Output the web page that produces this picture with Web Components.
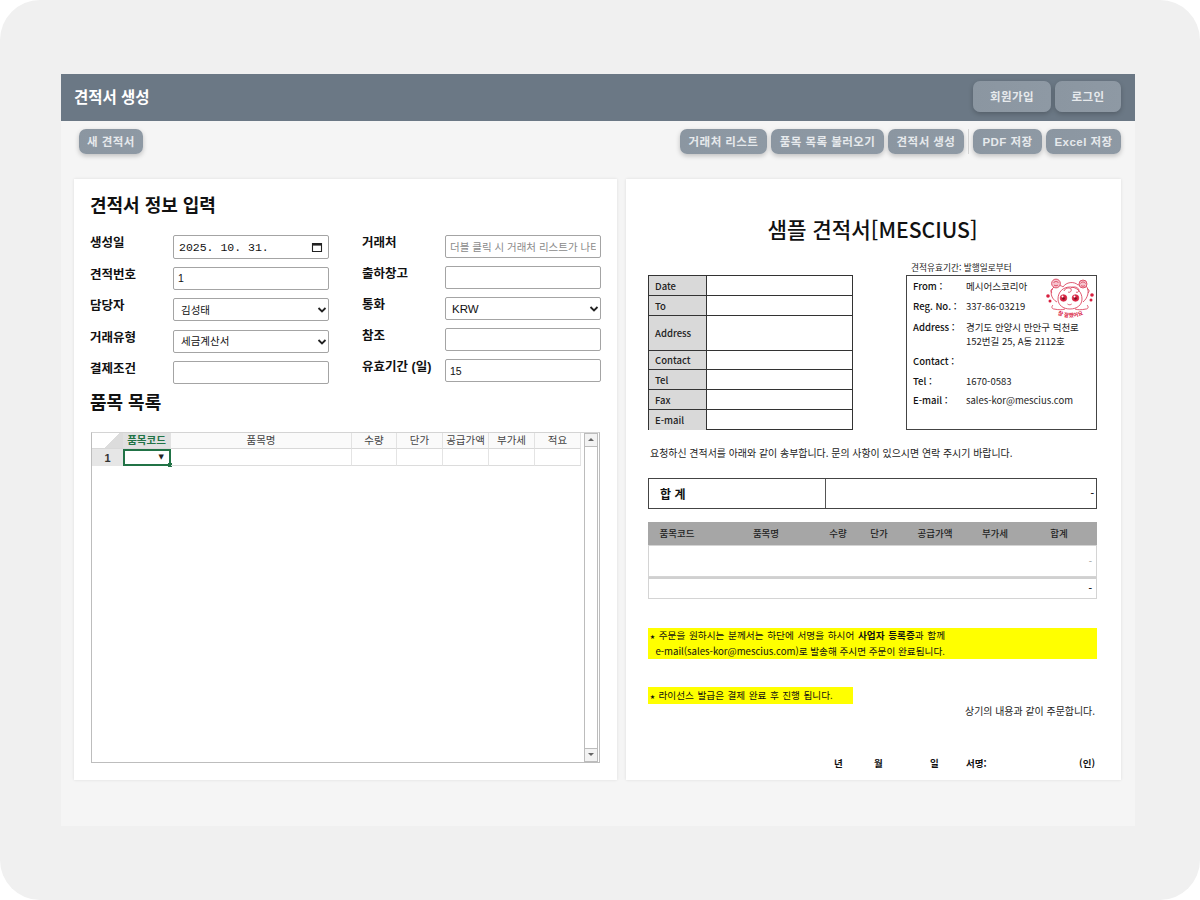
<!DOCTYPE html>
<html lang="ko">
<head>
<meta charset="utf-8">
<title>견적서 생성</title>
<style>
    html, body { margin: 0; padding: 0; background: #fff; }
    body { font-family: "Noto Sans CJK KR", "Liberation Sans", sans-serif; }
</style>
</head>
<body>
<quote-app></quote-app>

<script>
const SANS = `"Liberation Sans", "Noto Sans CJK KR", sans-serif`;

class ToolButton extends HTMLElement {
    constructor() {
        super();
        this.attachShadow({mode: 'open'});
        this.shadowRoot.innerHTML = `
<style>
    :host { display: inline-block; }
    button {
        background: linear-gradient(90deg, #8b96a1, #8e99a4);
        border: 0;
        border-radius: 7px;
        box-shadow: 0 2px 5px rgba(0, 0, 0, 0.22);
        color: #e6e9ec;
        display: block;
        font: bold 11.5px ${SANS};
        height: var(--btn-height, 25px);
        letter-spacing: 0.45px;
        padding: 0 0 2px 0;
        text-align: center;
        white-space: nowrap;
        width: var(--btn-width, 70px);
    }
</style>
<button><slot></slot></button>`;
    }

    connectedCallback() {
        if(this.dataset.width) {
            this.style.setProperty("--btn-width", `${this.dataset.width}px`);
        }
        if(this.dataset.height) {
            this.style.setProperty("--btn-height", `${this.dataset.height}px`);
        }
    }
}

class AppHeader extends HTMLElement {
    constructor() {
        super();
        this.attachShadow({mode: 'open'});
        this.shadowRoot.innerHTML = `
<style>
    :host {
        align-items: center;
        background: #6b7885;
        box-sizing: border-box;
        display: flex;
        height: 47px;
        justify-content: space-between;
        padding: 0 14px 0 13px;
    }
    h1 { color: #fff; font: bold 15.5px ${SANS}; margin: 0 0 4px 0; }
    .actions { display: flex; gap: 4px; margin-bottom: 2px; }
</style>
<h1>견적서 생성</h1>
<div class="actions">
    <tool-button data-width="78" data-height="31">회원가입</tool-button>
    <tool-button data-width="66" data-height="31">로그인</tool-button>
</div>`;
    }
}

class AppToolbar extends HTMLElement {
    constructor() {
        super();
        this.attachShadow({mode: 'open'});
        this.shadowRoot.innerHTML = `
<style>
    :host {
        display: flex;
        height: 58px;
        box-sizing: border-box;
        justify-content: space-between;
        padding: 8px 14px 0 18px;
    }
    .group { align-items: flex-start; display: flex; gap: 4px; }
    .sep { background: #d3d3d3; height: 25px; width: 1px; }
</style>
<div class="group"><tool-button data-width="64">새 견적서</tool-button></div>
<div class="group">
    <tool-button data-width="87">거래처 리스트</tool-button>
    <tool-button data-width="113">품목 목록 불러오기</tool-button>
    <tool-button data-width="76">견적서 생성</tool-button>
    <div class="sep"></div>
    <tool-button data-width="69">PDF 저장</tool-button>
    <tool-button data-width="75">Excel 저장</tool-button>
</div>`;
    }
}

class FormField extends HTMLElement {
    constructor() {
        super();
        this.attachShadow({mode: 'open'});
    }

    connectedCallback() {
        let type = this.dataset.type || "text";
        let value = this.dataset.value || "";
        let control = "";

        if(type === "date") {
            control = `<div class="box date"><span>${value}</span>
                <svg width="12" height="12" viewBox="0 0 12 12"><path d="M1.5 2.5h9v8h-9z" fill="none" stroke="#222" stroke-width="1.1"/><path d="M1.5 2h9v2.6h-9z" fill="#222"/></svg></div>`;
        } else if(type === "select") {
            control = `<div class="pick"><select class="box ${this.dataset.font || ""}"><option>${value}</option></select>
                <svg width="10" height="8" viewBox="0 0 10 8"><path d="M1.5 2l3.5 3.5L8.5 2" fill="none" stroke="#222" stroke-width="1.8"/></svg></div>`;
        } else {
            control = `<input class="box" type="text" value="${value}" placeholder="${this.dataset.placeholder || ""}">`;
        }

        this.shadowRoot.innerHTML = `
<style>
    :host {
        align-items: start;
        display: grid;
        grid-template-columns: 83px 156px;
        height: 24px;
    }
    label { color: #111; font: bold 12.5px/16px ${SANS}; white-space: nowrap; }
    .box {
        background: #fff;
        border: 1px solid #a4a4a4;
        border-radius: 2px;
        box-sizing: border-box;
        color: #111;
        display: block;
        font: 10.5px ${SANS};
        height: 23px;
        margin: 0;
        outline: 0;
        padding: 0 4px;
        width: 156px;
    }
    input::placeholder { color: #8a8a8a; opacity: 1; }
    .pick { position: relative; }
    .pick svg { position: absolute; right: 2px; top: 8px; }
    select.box { appearance: none; padding-left: 7px; }
    select.latin { font-size: 11.5px; padding-left: 6px; }
    .date {
        align-items: center;
        display: flex;
        font: 11.5px "Liberation Mono", "Noto Sans CJK KR", monospace;
        height: 24px;
        justify-content: space-between;
        padding: 0 5px 0 5px;
    }
    .date svg { display: block; }
</style>
<label>${this.dataset.label}</label>
${control}`;
    }
}

class SheetGrid extends HTMLElement {
    constructor() {
        super();
        this.attachShadow({mode: 'open'});
        let columns = [["품목코드", 48], ["품목명", 181], ["수량", 45], ["단가", 46], ["공급가액", 46], ["부가세", 46], ["적요", 46]];
        let heads = columns.map(([name, width], i) =>
            `<div class="head ${i === 0 ? "active" : ""}" style="width:${width}px">${name}</div>`).join("");
        let cells = columns.map(([name, width], i) =>
            `<div class="cell ${i === 0 ? "active" : ""}" style="width:${width}px">${i === 0 ? `<span class="drop">▼</span><i class="handle"></i>` : ""}</div>`).join("");

        this.shadowRoot.innerHTML = `
<style>
    :host {
        background: #fff;
        border: 1px solid #bdbdbd;
        border-top-color: #d4d4d4;
        box-sizing: border-box;
        display: grid;
        grid-template-columns: 492px 14px;
        height: 331px;
        width: 509px;
    }
    .sheet { min-width: 0; }
    .row { display: flex; }
    .corner {
        background: linear-gradient(135deg, #fff 60%, #dcdcdc 60%);
        border-bottom: 1px solid #d8d8d8;
        box-sizing: border-box;
        height: 16px;
        width: 31px;
    }
    .rownum {
        align-items: center;
        background: #e6e6e6;
        box-sizing: border-box;
        color: #333;
        display: flex;
        font: bold 11px ${SANS};
        height: 17px;
        justify-content: center;
        width: 31px;
    }
    .head {
        background: #fafafa;
        border-bottom: 1px solid #d8d8d8;
        border-right: 1px solid #e2e2e2;
        box-sizing: border-box;
        color: #444;
        font: 10.5px/15px ${SANS};
        height: 16px;
        text-align: center;
    }
    .head.active { background: #e1e1e1; color: #217346; font-weight: bold; }
    .cell {
        border-bottom: 1px solid #dcdcdc;
        border-right: 1px solid #e4e4e4;
        box-sizing: border-box;
        height: 17px;
        position: relative;
    }
    .cell.active { border: 2px solid #217346; }
    .drop { color: #222; font: 7px/13px "DejaVu Sans", sans-serif; position: absolute; right: 5px; top: 0; }
    .handle { background: #217346; bottom: -3px; height: 4px; position: absolute; right: -3px; width: 4px; }
    .bar {
        background: #f3f3f3;
        border-left: 1px solid #bcbcbc;
        border-right: 1px solid #bcbcbc;
        box-sizing: border-box;
        display: flex;
        flex-direction: column;
        justify-content: space-between;
    }
    .bar b {
        background: #f3f3f3;
        border-bottom: 1px solid #bcbcbc;
        border-top: 1px solid #bcbcbc;
        display: block;
        height: 12px;
        position: relative;
    }
    .bar b::after {
        border-left: 3px solid transparent;
        border-right: 3px solid transparent;
        border-bottom: 3px solid #666;
        content: "";
        left: 3px;
        position: absolute;
        top: 4px;
    }
    .bar b:last-child::after { border-bottom: 0; border-top: 3px solid #666; }
    .track { background: #fff; flex: 1; }
</style>
<div class="sheet">
    <div class="row"><div class="corner"></div>${heads}</div>
    <div class="row"><div class="rownum">1</div>${cells}</div>
</div>
<div class="bar"><b></b><div class="track"></div><b></b></div>`;
    }
}

class QuoteForm extends HTMLElement {
    constructor() {
        super();
        this.attachShadow({mode: 'open'});
        this.shadowRoot.innerHTML = `
<style>
    :host {
        background: #fff;
        box-shadow: 0 0 3px rgba(0, 0, 0, 0.1);
        box-sizing: border-box;
        display: block;
        padding: 17px 16px 0 16px;
    }
    h2 { color: #111; font: bold 18px/20px ${SANS}; margin: 0; }
    .fields { display: flex; gap: 33px; margin-top: 19px; }
    .col { display: flex; flex-direction: column; gap: 7.5px; }
    .col.right { gap: 7px; }
    h3 { color: #111; font: bold 18px/20px ${SANS}; margin: 8px 0 19px 0; }
    sheet-grid { margin-left: 1px; }
</style>
<h2>견적서 정보 입력</h2>
<div class="fields">
    <div class="col">
        <form-field data-label="생성일" data-type="date" data-value="2025. 10. 31."></form-field>
        <form-field data-label="견적번호" data-value="1"></form-field>
        <form-field data-label="담당자" data-type="select" data-value="김성태"></form-field>
        <form-field data-label="거래유형" data-type="select" data-value="세금계산서"></form-field>
        <form-field data-label="결제조건"></form-field>
    </div>
    <div class="col right">
        <form-field data-label="거래처" data-placeholder="더블 클릭 시 거래처 리스트가 나타납니다"></form-field>
        <form-field data-label="출하창고"></form-field>
        <form-field data-label="통화" data-type="select" data-font="latin" data-value="KRW"></form-field>
        <form-field data-label="참조"></form-field>
        <form-field data-label="유효기간 (일)" data-value="15"></form-field>
    </div>
</div>
<h3>품목 목록</h3>
<sheet-grid></sheet-grid>`;
    }
}

class QuoteStamp extends HTMLElement {
    constructor() {
        super();
        this.attachShadow({mode: 'open'});
        this.shadowRoot.innerHTML = `
<style>
    :host { display: block; height: 44px; position: absolute; right: 1px; top: 1px; width: 50px; }
    svg { display: block; }
    text { fill: #d8203f; font: bold 5.4px "Noto Sans CJK KR", sans-serif; stroke: none; }
</style>
<svg width="50" height="44" viewBox="0 0 50 44" fill="none" stroke="#d8324f" stroke-width="0.8">
    <path d="M12 25c-6-3-8-11-3-15 3-2 7-2 9 0 3-5 11-6 15-2 2-1 6-1 8 1 4 4 2 12-3 16"/>
    <path d="M13 22c0 6 5 10 12 10s12-4 12-10c0-7-5-12-12-12S13 15 13 22z"/>
    <path d="M8 28c-2 2-1 4 1 4 5 1 8 1 11 0M42 28c2 2 1 4-1 4-5 1-8 1-11 0"/>
    <path d="M19 14c1-3 5-4 7-2 1 2-1 4-3 3M26 11c3-2 7-1 8 2 0 2-2 3-3 2M7 16c-2-2-1-4 1-4M43 16c2-2 1-4-1-4"/>
    <circle cx="11" cy="6.5" r="4.4" fill="#f5c4cd"/>
    <path d="M8.5 6c1-2 4-2 5 0M9 8c1 1 3 1 4 0"/>
    <circle cx="38" cy="7" r="4" fill="#f5c4cd"/>
    <path d="M35.5 6.5c1-2 4-2 5 0M36 8.5c1 1 3 1 4 0"/>
    <circle cx="18.5" cy="21" r="3.3" fill="#d8203f"/>
    <circle cx="30.5" cy="21" r="3.3" fill="#d8203f"/>
    <circle cx="18.5" cy="21.5" r="1.3" fill="#7a1024" stroke="none"/>
    <circle cx="30.5" cy="21.5" r="1.3" fill="#7a1024" stroke="none"/>
    <circle cx="17.5" cy="19.5" r="1" fill="#fff" stroke="none"/>
    <circle cx="29.5" cy="19.5" r="1" fill="#fff" stroke="none"/>
    <path d="M22.5 27c1.2 1 3 1 4.2 0"/>
    <circle cx="3" cy="19" r="1.8" fill="#d8203f" stroke="none"/>
    <circle cx="5" cy="24" r="1.5" fill="#d8203f" stroke="none"/>
    <circle cx="47" cy="18" r="1.8" fill="#d8203f" stroke="none"/>
    <circle cx="46" cy="23" r="1.5" fill="#d8203f" stroke="none"/>
    <defs><path id="arc" d="M9 35c8 7 24 7 33 0"/></defs>
    <text><textPath href="#arc" startOffset="50%" text-anchor="middle">참 잘했어요</textPath></text>
</svg>`;
    }
}

class QuotePreview extends HTMLElement {
    constructor() {
        super();
        this.attachShadow({mode: 'open'});
        let rows = [["Date", 20], ["To", 20], ["Address", 35], ["Contact", 19], ["Tel", 20], ["Fax", 20], ["E-mail", 20]];
        let infoRows = rows.map(([name, height]) =>
            `<div class="info-row" style="height:${height}px"><div class="info-label">${name}</div><div></div></div>`).join("");
        let heads = [["품목코드", 58], ["품목명", 120], ["수량", 24], ["단가", 58], ["공급가액", 54], ["부가세", 66], ["합계", 62]];

        this.shadowRoot.innerHTML = `
<style>
    :host {
        background: #fff;
        box-shadow: 0 0 3px rgba(0, 0, 0, 0.1);
        box-sizing: border-box;
        color: #222;
        display: block;
        font: 9.5px "Noto Sans CJK KR", "Open Sans", sans-serif;
        overflow: hidden;
        padding: 0 24px 0 22px;
    }
    .title { color: #111; font-size: 21.2px; font-weight: 500; line-height: 28px; margin-top: 36px; text-align: center; white-space: nowrap; }
    .top { display: flex; justify-content: space-between; margin-top: 32px; }
    .info { border: 1px solid #333; box-sizing: border-box; height: 155px; width: 205px; }
    .info-row { border-bottom: 1px solid #333; box-sizing: border-box; display: grid; grid-template-columns: 58px 1fr; }
    .info-row:last-child { border-bottom: 0; }
    .info-label {
        align-items: center;
        background: #d9d9d9;
        border-right: 1px solid #333;
        display: flex;
        font-weight: 500;
        padding-left: 6px;
    }
    .from-wrap { position: relative; width: 191px; }
    .caption { font-size: 8.7px; left: 5px; line-height: 12px; position: absolute; top: -13px; white-space: nowrap; }
    .from {
        align-content: start;
        border: 1px solid #444;
        box-sizing: border-box;
        display: grid;
        grid-template-columns: 53px 1fr;
        height: 155px;
        padding: 1px 0 0 6px;
        position: relative;
    }
    .from div { line-height: 19.5px; white-space: nowrap; }
    .from .k { font-weight: 500; color: #111; }
    .from .addr { line-height: 13.5px; padding: 5px 0 4px; }
    .from .kaddr { line-height: 13.5px; padding: 5px 0 4px; font-weight: 500; color: #111; }
    .request { font-size: 9.95px; line-height: 14px; margin: 16px 0 0 2px; white-space: nowrap; }
    .total {
        border: 1px solid #444;
        box-sizing: border-box;
        display: grid;
        grid-template-columns: 177px 1fr;
        height: 31px;
        margin-top: 18px;
    }
    .total .label { border-right: 1px solid #555; color: #111; font-size: 12px; font-weight: 700; line-height: 29px; padding-left: 11px; }
    .total .sum { font-weight: 700; line-height: 29px; padding-right: 2px; text-align: right; }
    .thead { background: #a6a6a6; color: #222; display: flex; font-weight: 500; height: 23px; line-height: 23px; margin-top: 13px; white-space: nowrap; }
    .thead div { display: flex; justify-content: center; }
    .trow { border: 1px solid #d4d4d4; box-sizing: border-box; height: 32px; line-height: 30px; padding-right: 4px; text-align: right; color: #999; }
    .trow.sum { border-top: 2px solid #d0d0d0; color: #222; height: 22px; line-height: 19px; font-weight: 700; }
    .note { background: #ff0; color: #111; font-size: 9.65px; line-height: 15.5px; margin-top: 29px; padding: 0 0 0 2px; white-space: nowrap; }
    .note b { font-weight: 700; }
    .note i { font-size: 5px; font-style: normal; vertical-align: 1px; }
    .note .wide { word-spacing: 1px; }
    .note.short { line-height: 16px; margin-top: 28px; width: 203px; word-spacing: 0.8px; }
    .agree { font-size: 9.95px; line-height: 14px; padding: 0 2px 0 0; text-align: right; }
    .sign {
        color: #111;
        display: grid;
        font-weight: 700;
        grid-template-columns: 40px 56px 36px 1fr auto;
        line-height: 14px;
        margin-top: 38px;
        padding: 0 2px 0 186px;
    }
</style>
<div class="title">샘플 견적서[MESCIUS]</div>
<div class="top">
    <div class="info">${infoRows}</div>
    <div class="from-wrap">
        <div class="caption">견적유효기간: 발행일로부터</div>
        <div class="from">
            <div class="k">From :</div><div>메시어스코리아</div>
            <div class="k">Reg. No. :</div><div>337-86-03219</div>
            <div class="kaddr">Address :</div><div class="addr">경기도 안양시 만안구 덕천로<br>152번길 25, A동 2112호</div>
            <div class="k">Contact :</div><div></div>
            <div class="k">Tel :</div><div>1670-0583</div>
            <div class="k">E-mail :</div><div>sales-kor@mescius.com</div>
            <quote-stamp></quote-stamp>
        </div>
    </div>
</div>
<div class="request">요청하신 견적서를 아래와 같이 송부합니다. 문의 사항이 있으시면 연락 주시기 바랍니다.</div>
<div class="total"><div class="label">합 계</div><div class="sum">-</div></div>
<div class="thead">${heads.map(([name, width]) => `<div style="width:${width}px">${name}</div>`).join("")}</div>
<div class="trow">-</div>
<div class="trow sum">-</div>
<div class="note"><span class="wide"><i>★</i> 주문을 원하시는 분께서는 하단에 서명을 하시어 <b>사업자 등록증</b>과 함께</span><br>&nbsp; e-mail(sales-kor@mescius.com)로 발송해 주시면 주문이 완료됩니다.</div>
<div class="note short"><i>★</i> 라이선스 발급은 결제 완료 후 진행 됩니다.</div>
<div class="agree">상기의 내용과 같이 주문합니다.</div>
<div class="sign"><span>년</span><span>월</span><span>일</span><span>서명:</span><span>(인)</span></div>`;
    }
}

class QuoteApp extends HTMLElement {
    constructor() {
        super();
        this.attachShadow({mode: 'open'});
        this.shadowRoot.innerHTML = `
<style>
    :host {
        background: #f0f0f0;
        border-radius: 40px;
        box-sizing: border-box;
        display: block;
        height: 900px;
        padding: 74px 65px 74px 61px;
        width: 1200px;
    }
    .app { background: #f5f5f5; height: 752px; }
    .cards {
        display: grid;
        gap: 9px;
        grid-template-columns: 543px 495px;
        height: 601px;
        padding-left: 13px;
    }
</style>
<div class="app">
    <app-header></app-header>
    <app-toolbar></app-toolbar>
    <div class="cards">
        <quote-form></quote-form>
        <quote-preview></quote-preview>
    </div>
</div>`;
    }
}

customElements.define('tool-button', ToolButton);
customElements.define('app-header', AppHeader);
customElements.define('app-toolbar', AppToolbar);
customElements.define('form-field', FormField);
customElements.define('sheet-grid', SheetGrid);
customElements.define('quote-form', QuoteForm);
customElements.define('quote-stamp', QuoteStamp);
customElements.define('quote-preview', QuotePreview);
customElements.define('quote-app', QuoteApp);
</script>
</body>
</html>
